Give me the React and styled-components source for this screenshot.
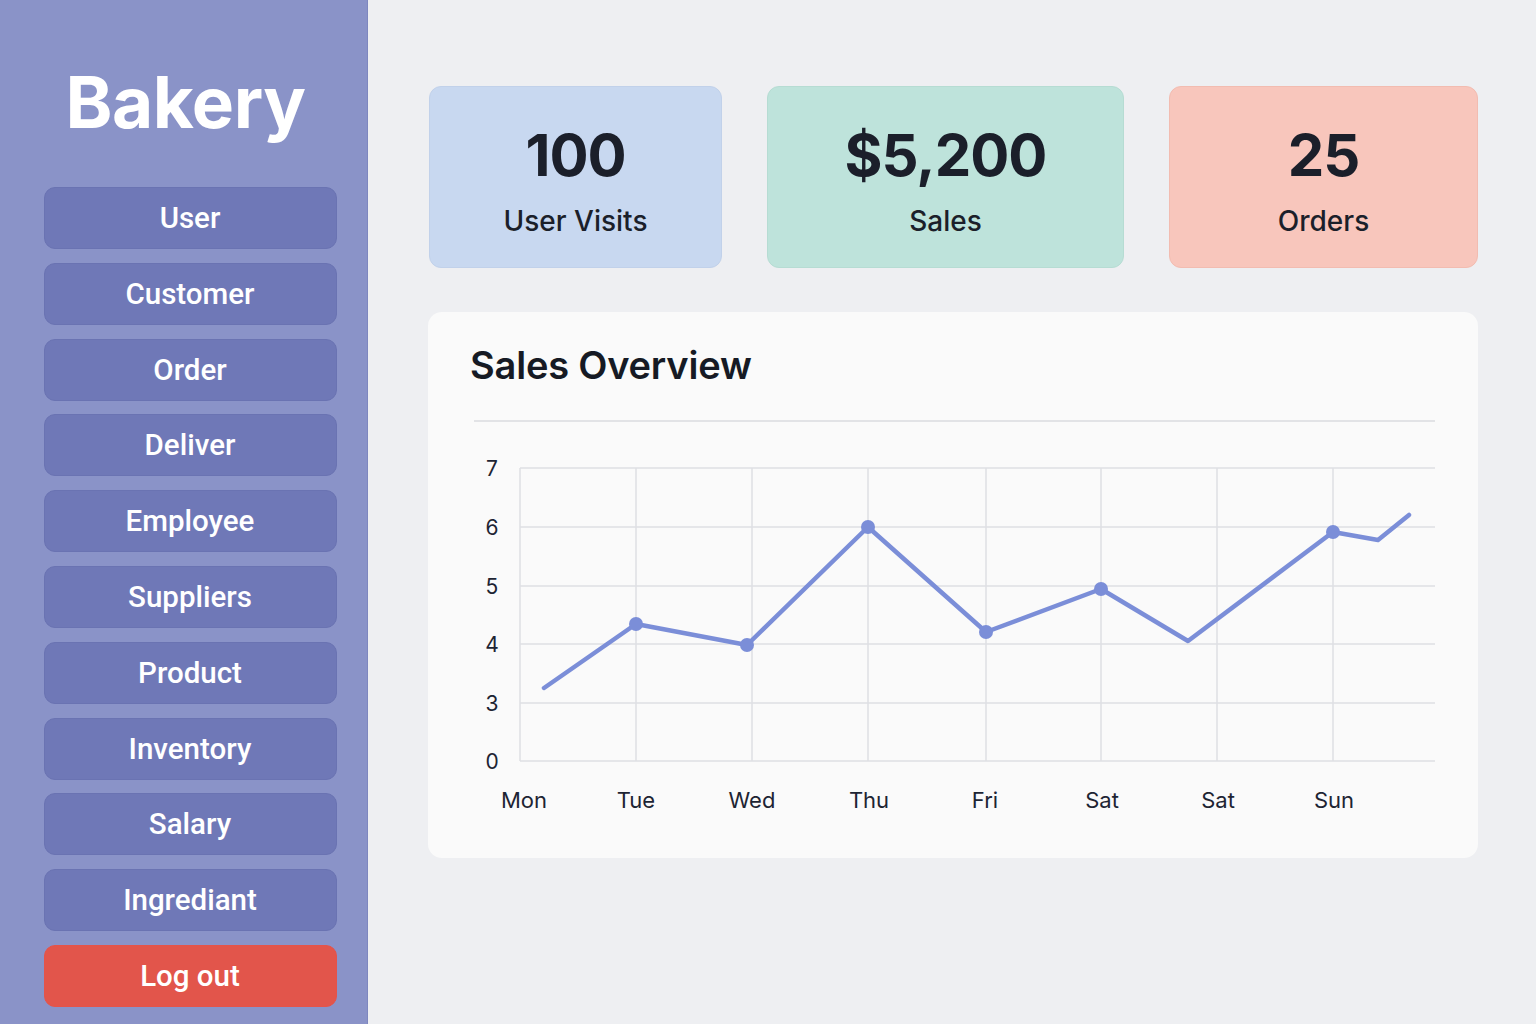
import React from "react";
import styled, { createGlobalStyle } from "styled-components";

const GlobalStyle = createGlobalStyle`
  html, body {
    margin: 0;
    padding: 0;
    background: #eeeff2;
    font-family: Inter, "Noto Sans", "Liberation Sans", sans-serif;
  }
`;

const Page = styled.div`
  display: flex;
  width: 1536px;
  height: 1024px;
  overflow: hidden;
`;

const Sidebar = styled.aside`
  width: 368px;
  flex-shrink: 0;
  background: #8a93c8;
  border-right: 1px solid #7e87bf;
  box-sizing: border-box;
  display: flex;
  flex-direction: column;
  align-items: center;
  padding-top: 58px;
`;

const Brand = styled.h1`
  margin: 0 0 0 4px;
  color: #fff;
  font-size: 71px;
  font-weight: 700;
  line-height: 88px;
  letter-spacing: -0.5px;
`;

const Nav = styled.nav`
  margin-top: 41px;
  margin-left: 13px;
  display: flex;
  flex-direction: column;
  gap: 13.8px;
`;

const NavButton = styled.button`
  width: 293px;
  height: 62px;
  border-radius: 11px;
  border: 1px solid ${(p) => (p.$danger ? "#e5534a" : "#6a73b2")};
  background: ${(p) => (p.$danger ? "#e2554b" : "#6f78b7")};
  color: #fff;
  font-family: Roboto, Inter, sans-serif;
  font-size: 29.5px;
  font-weight: 500;
  cursor: pointer;
  padding: 0;
`;

const Main = styled.main`
  flex: 1;
  min-width: 0;
  padding: 86px 58px 0 60px;
  display: flex;
  flex-direction: column;
`;

const Stats = styled.div`
  display: flex;
  gap: 45px;
  padding-left: 1px;
`;

const StatCard = styled.div`
  width: ${(p) => p.$w}px;
  height: 182px;
  box-sizing: border-box;
  border-radius: 12px;
  background: ${(p) => p.$bg};
  border: 1px solid ${(p) => p.$border};
  display: flex;
  flex-direction: column;
  align-items: center;
  padding-top: 33px;
  color: #1b1f2a;
`;

const StatValue = styled.div`
  font-size: 58px;
  font-weight: 700;
  line-height: 70px;
  letter-spacing: -1px;
`;

const StatLabel = styled.div`
  margin-top: 14px;
  font-size: 28px;
  font-weight: 500;
  line-height: 34px;
`;

const ChartCard = styled.section`
  margin-top: 44px;
  height: 546px;
  background: #fafafa;
  border-radius: 14px;
  box-sizing: border-box;
  padding: 28px 42px 0 42px;
`;

const ChartTitle = styled.h2`
  margin: 0;
  font-size: 38px;
  font-weight: 600;
  color: #161a24;
  line-height: 50px;
  letter-spacing: -0.2px;
`;

const Divider = styled.div`
  margin: 30px 0 0 4px;
  width: 961px;
  height: 2px;
  background: #e2e3e6;
`;

const stats = [
  { value: "100", label: "User Visits", w: 293, bg: "#c8d8f0", border: "#c1d1ea" },
  { value: "$5,200", label: "Sales", w: 357, bg: "#bee3db", border: "#b6dcd3" },
  { value: "25", label: "Orders", w: 309, bg: "#f8c6bc", border: "#f2bcb1" },
];

const navItems = [
  "User", "Customer", "Order", "Deliver", "Employee", "Suppliers",
  "Product", "Inventory", "Salary", "Ingrediant",
];

// chart drawn in an svg whose origin is at page (470, 440)
const OX = 470;
const OY = 440;
const yTicks = [
  { label: "7", y: 468 },
  { label: "6", y: 527 },
  { label: "5", y: 586 },
  { label: "4", y: 644 },
  { label: "3", y: 703 },
  { label: "0", y: 761 },
];
const xTicks = [
  { label: "Mon", x: 524, grid: 520 },
  { label: "Tue", x: 636, grid: 636 },
  { label: "Wed", x: 752, grid: 752 },
  { label: "Thu", x: 869, grid: 868 },
  { label: "Fri", x: 985, grid: 986 },
  { label: "Sat", x: 1102, grid: 1101 },
  { label: "Sat", x: 1218, grid: 1217 },
  { label: "Sun", x: 1334, grid: 1333 },
];
const points = [
  [544, 688, false],
  [636, 624, true],
  [747, 645, true],
  [868, 527, true],
  [986, 632, true],
  [1101, 589, true],
  [1188, 641, false],
  [1333, 532, true],
  [1378, 540, false],
  [1409, 515, false],
];

const SalesChart = () => (
  <svg width="966" height="380" viewBox={`${OX} ${OY} 966 380`} style={{ display: "block", marginTop: 18 }}>
    {yTicks.map((t) => (
      <g key={t.label}>
        <line x1={520} x2={1435} y1={t.y} y2={t.y} stroke="#dedfe3" strokeWidth="1.5" />
        <text x={492} y={t.y + 8} textAnchor="middle" fontSize="21" fill="#1d2433" fontFamily="Inter, sans-serif">
          {t.label}
        </text>
      </g>
    ))}
    {xTicks.map((t, i) => (
      <g key={i}>
        <line x1={t.grid} x2={t.grid} y1={468} y2={761} stroke="#dedfe3" strokeWidth="1.5" />
        <text x={t.x} y={808} textAnchor="middle" fontSize="22" fill="#1d2433" fontFamily="Inter, sans-serif">
          {t.label}
        </text>
      </g>
    ))}
    <polyline
      points={points.map((p) => `${p[0]},${p[1]}`).join(" ")}
      fill="none"
      stroke="#7b8ed8"
      strokeWidth="4.5"
      strokeLinejoin="round"
      strokeLinecap="round"
    />
    {points.filter((p) => p[2]).map((p, i) => (
      <circle key={i} cx={p[0]} cy={p[1]} r="7" fill="#7b8ed8" />
    ))}
  </svg>
);

const App = () => {
  return (
    <>
      <GlobalStyle />
      <Page>
        <Sidebar>
          <Brand>Bakery</Brand>
          <Nav>
            {navItems.map((item) => (
              <NavButton key={item}>{item}</NavButton>
            ))}
            <NavButton $danger>Log out</NavButton>
          </Nav>
        </Sidebar>
        <Main>
          <Stats>
            {stats.map((s) => (
              <StatCard key={s.label} $w={s.w} $bg={s.bg} $border={s.border}>
                <StatValue>{s.value}</StatValue>
                <StatLabel>{s.label}</StatLabel>
              </StatCard>
            ))}
          </Stats>
          <ChartCard>
            <ChartTitle>Sales Overview</ChartTitle>
            <Divider />
            <SalesChart />
          </ChartCard>
        </Main>
      </Page>
    </>
  );
};

export default App;
